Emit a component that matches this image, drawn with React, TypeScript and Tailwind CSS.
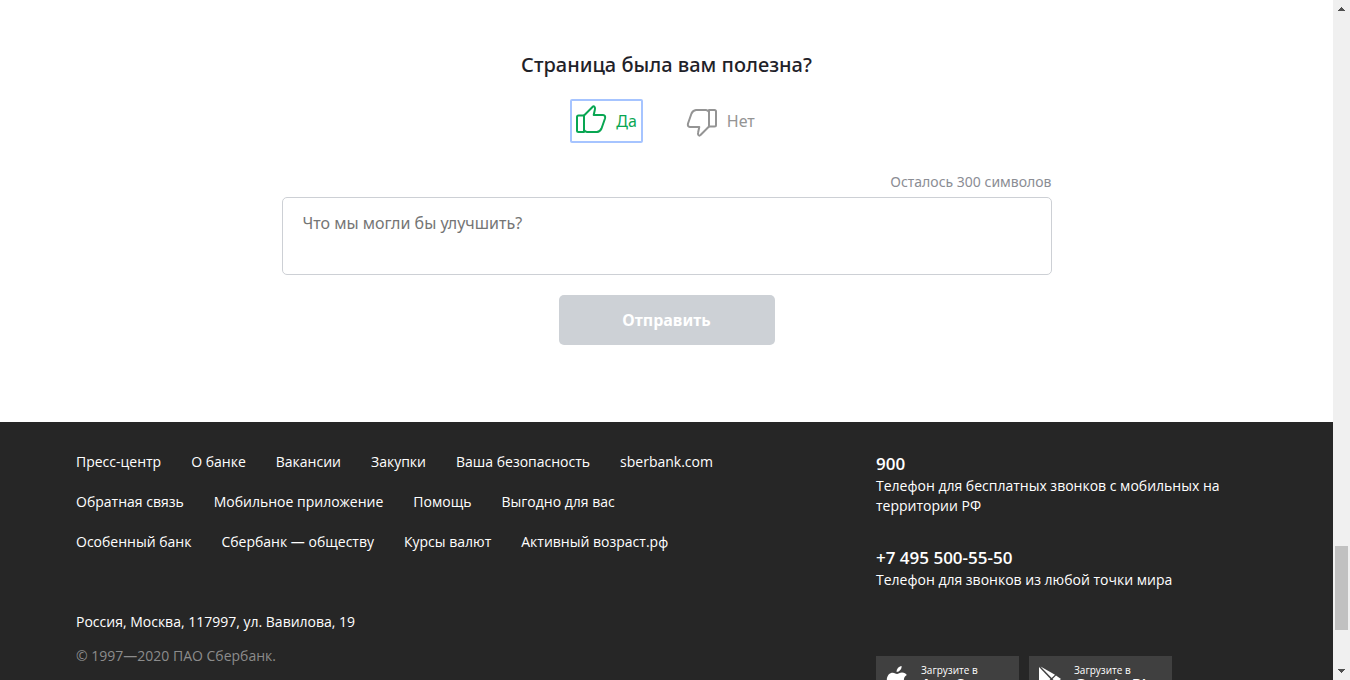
import { useState } from "react";

const linkRows = [
  ["Пресс-центр", "О банке", "Вакансии", "Закупки", "Ваша безопасность", "sberbank.com"],
  ["Обратная связь", "Мобильное приложение", "Помощь", "Выгодно для вас"],
  ["Особенный банк", "Сбербанк — обществу", "Курсы валют", "Активный возраст.рф"],
];

const phones = [
  { number: "900", href: "tel:900", note: "Телефон для бесплатных звонков с мобильных на территории РФ" },
  { number: "+7 495 500-55-50", href: "tel:+74955005550", note: "Телефон для звонков из любой точки мира" },
];

function ThumbUp() {
  return (
    <svg width="32" height="30" viewBox="1 2 32 30" className="overflow-visible" fill="none" stroke="currentColor" strokeWidth="2" strokeLinejoin="round" strokeLinecap="round" aria-hidden="true">
      <path d="M3.5 11.5H9V28H3.5Q2 28 2 26.5V13Q2 11.5 3.5 11.5Z" />
      <path d="M9 11.5L17.5 3Q18.6 1.6 19.6 3Q20.3 4.2 19.9 5.5L18.7 11H28Q30.8 11.3 30 14.5L26.5 24.5Q25.2 27.6 22 28H12Q10 27.7 9 26" />
    </svg>
  );
}

function ThumbDown() {
  return (
    <svg width="32" height="30" viewBox="1 -2 32 30" className="overflow-visible" fill="none" stroke="currentColor" strokeWidth="2" strokeLinejoin="round" strokeLinecap="round" aria-hidden="true">
      <path d="M28.5 18.5H23V2H28.5Q30 2 30 3.5V17Q30 18.5 28.5 18.5Z" />
      <path d="M23 18.5L14.5 27Q13.4 28.4 12.4 27Q11.7 25.8 12.1 24.5L13.3 19H4Q1.2 18.7 2 15.5L5.5 5.5Q6.8 2.4 10 2H20Q22 2.3 23 4" />
    </svg>
  );
}

function AppleLogo() {
  return (
    <svg width="22" height="26" viewBox="0 0 22 26" fill="#fff" aria-hidden="true">
      <path d="M15.6 0C15.8 3.1 13.5 5.9 10.6 6C10.3 3 12.8.4 15.6 0Z" />
      <path d="M11 8C12.3 8 13.7 6.5 16 6.5C18.3 6.5 20 7.7 20.8 9C16.4 11.5 17.3 17.3 21.5 19C20.5 21.7 18.4 25 16.3 25C14.6 25 13.8 24 11.8 24C9.8 24 9 25 7.4 25C4.5 25 .8 19.2.8 14C.8 9.2 3.8 6.7 6.7 6.7C8.7 6.7 10 8 11 8Z" />
    </svg>
  );
}

function PlayLogo() {
  return (
    <svg width="22" height="26" viewBox="0 0 22 26" fill="#fff" aria-hidden="true">
      <path d="M0 1L11.5 13L0 25Z" />
      <path d="M1.5 .5L16 8.7L12.7 12Z" />
      <path d="M17 9.4L22 13L17 16.6L13.5 13Z" />
      <path d="M1.5 25.5L16 17.3L12.7 14Z" />
    </svg>
  );
}

function StoreLink({ store, logo }: { store: string; logo: React.ReactNode }) {
  return (
    <a href="#" className="flex h-12 w-[143px] gap-[13px] bg-[#404040] px-[10px] pt-2 text-white">
      <span className="pt-[2px]">{logo}</span>
      <span className="flex flex-col">
        <span className="text-[10px] font-medium leading-3">Загрузите в</span>
        <span className="whitespace-nowrap text-base font-semibold leading-[18px]">{store}</span>
      </span>
    </a>
  );
}

function Feedback() {
  const [useful, setUseful] = useState(true);
  const [text, setText] = useState("");
  return (
    <main className="flex flex-col items-center px-5 pt-[51px] pb-[77px] font-['Noto_Sans',sans-serif]">
      <h2 className="text-[20px] font-medium leading-7 text-[#1f2229]">Страница была вам полезна?</h2>
      <div className="mt-5 flex gap-[38px] pr-0.5">
        <button
          type="button"
          aria-pressed={useful}
          onClick={() => setUseful(true)}
          className={`flex h-11 items-center gap-2 rounded-[2px] border-2 px-1 text-base ${useful ? "border-[#a6c4ff] text-[#08a652]" : "border-transparent text-[#949494]"}`}
        >
          <ThumbUp />
          Да
        </button>
        <button
          type="button"
          aria-pressed={!useful}
          onClick={() => setUseful(false)}
          className={`flex h-11 items-center gap-2 rounded-[2px] border-2 px-1 text-base ${useful ? "border-transparent text-[#949494]" : "border-[#a6c4ff] text-[#08a652]"}`}
        >
          <ThumbDown />
          Нет
        </button>
      </div>
      <form className="mt-[29px] flex w-full max-w-[770px] flex-col items-center" onSubmit={(e) => e.preventDefault()}>
        <label htmlFor="comment" className="mb-[5px] self-end text-sm leading-5 text-[#8b8d94]">
          Осталось {300 - text.length} символов
        </label>
        <textarea
          id="comment"
          maxLength={300}
          value={text}
          onChange={(e) => setText(e.target.value)}
          placeholder="Что мы могли бы улучшить?"
          className="block h-[78px] w-full resize-none rounded-[5px] border border-[#cdd0d5] px-5 py-[13px] text-base placeholder:text-[#757575]"
        />
        <button type="submit" disabled={!text} className="mt-5 h-[50px] w-[216px] rounded-[5px] bg-[#cdd1d6] text-base font-bold text-white">
          Отправить
        </button>
      </form>
    </main>
  );
}

function Footer() {
  return (
    <footer className="grow bg-[#262626] px-5 font-['Open_Sans',sans-serif] text-sm leading-5 text-white">
      <div className="mx-auto flex max-w-[1181px] pt-[30px]">
        <div className="grow">
          <nav className="flex flex-col gap-5">
            {linkRows.map((row) => (
              <ul key={row[0]} className="flex gap-[30px]">
                {row.map((label) => (
                  <li key={label}>
                    <a href="#">{label}</a>
                  </li>
                ))}
              </ul>
            ))}
          </nav>
          <p className="mt-[60px]">Россия, Москва, 117997, ул. Вавилова, 19</p>
          <p className="mt-[14px] text-[#8c8c8c]">© 1997—2020 ПАО Сбербанк.</p>
        </div>
        <div className="w-[381px] shrink-0">
          <div className="flex flex-col gap-[30px]">
            {phones.map((p) => (
              <div key={p.number}>
                <a href={p.href} className="block text-[17px] font-semibold leading-6">{p.number}</a>
                <p>{p.note}</p>
              </div>
            ))}
          </div>
          <div className="mt-[66px] flex gap-[10px]">
            <StoreLink store="App Store" logo={<AppleLogo />} />
            <StoreLink store="Google Play" logo={<PlayLogo />} />
          </div>
        </div>
      </div>
    </footer>
  );
}

function ScrollRail() {
  return (
    <div className="flex w-[17px] shrink-0 flex-col items-center bg-[#f0f0f0] py-[7px]" aria-hidden="true">
      <svg width="7" height="4" viewBox="0 0 7 4" fill="#505050"><path d="M3 0H4V1H5V2H6V3H7V4H0V3H1V2H2V1H3Z" /></svg>
      <div className="grow-[535]" />
      <div className="h-[84px] w-[13px] bg-[#c1c1c1]" />
      <div className="grow-[39]" />
      <svg width="7" height="4" viewBox="0 0 7 4" fill="#505050"><path d="M0 0H7V1H6V2H5V3H4V4H3V3H2V2H1V1H0Z" /></svg>
    </div>
  );
}

export default function App() {
  return (
    <div className="flex h-screen overflow-hidden bg-white">
      <div className="flex min-w-0 grow flex-col overflow-hidden">
        <Feedback />
        <Footer />
      </div>
      <ScrollRail />
    </div>
  );
}
